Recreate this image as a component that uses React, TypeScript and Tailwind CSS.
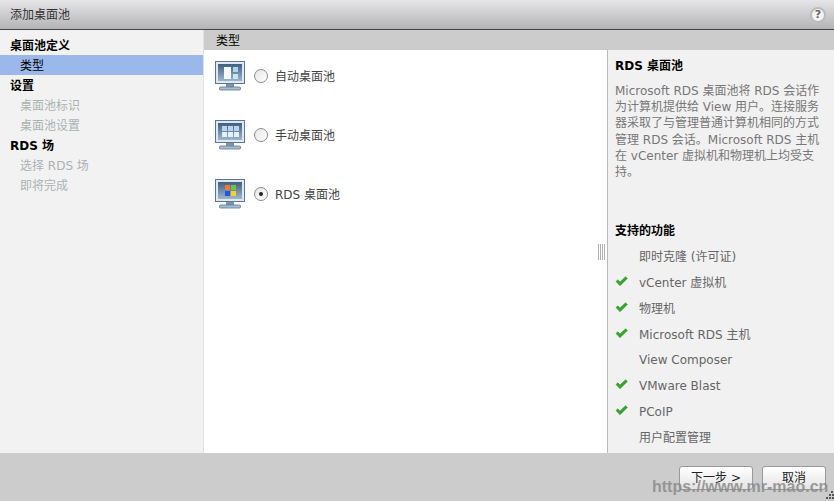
import React from 'react'

const FONT = '"DejaVu Sans", "Noto Sans CJK SC", sans-serif'

const descLines = [
  'Microsoft RDS 桌面池将 RDS 会话作',
  '为计算机提供给 View 用户。连接服务',
  '器采取了与管理普通计算机相同的方式',
  '管理 RDS 会话。Microsoft RDS 主机',
  '在 vCenter 虚拟机和物理机上均受支',
  '持。',
]

const features = [
  { label: '即时克隆 (许可证)', on: false },
  { label: 'vCenter 虚拟机', on: true },
  { label: '物理机', on: true },
  { label: 'Microsoft RDS 主机', on: true },
  { label: 'View Composer', on: false },
  { label: 'VMware Blast', on: true },
  { label: 'PCoIP', on: true },
  { label: '用户配置管理', on: false },
]

const navItems = [
  { label: '桌面池定义', kind: 'head' },
  { label: '类型', kind: 'active' },
  { label: '设置', kind: 'head' },
  { label: '桌面池标识', kind: 'off' },
  { label: '桌面池设置', kind: 'off' },
  { label: 'RDS 场', kind: 'head' },
  { label: '选择 RDS 场', kind: 'off' },
  { label: '即将完成', kind: 'off' },
]

function Monitor({ id, children }: { id: string; children: React.ReactNode }) {
  return (
    <svg width="30" height="30" viewBox="0 0 30 30" className="shrink-0">
      <defs>
        <linearGradient id={id} x1="0" y1="0" x2="0" y2="1">
          <stop offset="0" stopColor="#3f5f80" />
          <stop offset="1" stopColor="#9db6cf" />
        </linearGradient>
      </defs>
      <rect x="0.5" y="0.5" width="29" height="22" fill="#dfe8f1" stroke="#5d7690" />
      <rect x="3" y="3" width="24" height="17" fill={`url(#${id})`} />
      <rect x="11" y="23" width="8" height="3" fill="#7d96b0" />
      <rect x="4.5" y="26" width="21" height="3" rx="1" fill="#a9bdd1" stroke="#5d7690" strokeWidth="0.8" />
      {children}
    </svg>
  )
}

function Radio({ checked }: { checked?: boolean }) {
  return (
    <span className="ml-[9px] flex h-[14px] w-[14px] shrink-0 items-center justify-center rounded-full border border-[#8c8c8c] bg-gradient-to-br from-[#e6e6e6] to-white">
      {checked && <span className="h-[4px] w-[4px] rounded-full bg-[#222]" />}
    </span>
  )
}

function PoolOption({ label, checked, icon }: { label: string; checked?: boolean; icon: React.ReactNode }) {
  return (
    <div className="flex h-[30px] items-center">
      {icon}
      <Radio checked={checked} />
      <span className="ml-[7px] pt-[2px] text-xs text-[#444]">{label}</span>
    </div>
  )
}

function Check() {
  return (
    <svg width="13" height="11" viewBox="0 0 13 11" className="mb-[3px] shrink-0">
      <path d="M1 5.5 L2.8 3.8 L5 6 L10.5 0.8 L12.4 2.4 L5 9.8 Z" fill="#35a82a" stroke="#2b8a22" strokeWidth="0.5" />
    </svg>
  )
}

export default function App() {
  return (
    <div className="relative flex h-[501px] w-[834px] flex-col overflow-hidden bg-white text-xs" style={{ fontFamily: FONT }}>
      {/* title bar */}
      <div className="flex h-[30px] shrink-0 items-center justify-between border-b border-[#444] bg-gradient-to-b from-[#e6e6e8] to-[#b4b4b7] pl-[10px] pr-[8px]">
        <span className="text-xs text-[#333]">添加桌面池</span>
        <span className="flex h-[16px] w-[16px] items-center justify-center rounded-full border-2 border-[#bbb] bg-[#f4f4f4] text-[11px] leading-none font-bold text-[#666]">?</span>
      </div>

      <div className="flex min-h-0 flex-1">
        {/* steps */}
        <div className="w-[204px] shrink-0 border-r border-[#e2e2e2] bg-[#f2f2f2] pt-[5px]">
          {navItems.map((item) => (
            <div
              key={item.label}
              className={
                item.kind === 'head'
                  ? 'flex h-[20px] items-center pl-[10px] pt-[2px] font-bold text-black'
                  : item.kind === 'active'
                    ? 'flex h-[20px] items-center bg-[#9ab8ea] pl-[20px] pt-[2px] text-black'
                    : 'flex h-[20px] items-center pl-[20px] pt-[2px] text-[#abb2b2]'
              }
            >
              {item.label}
            </div>
          ))}
        </div>

        <div className="flex min-w-0 flex-1 flex-col">
          <div className="flex h-[20px] shrink-0 items-center bg-[#cccccc] pl-[12px] pt-[2px] text-black">类型</div>

          <div className="flex min-h-0 flex-1">
            {/* pool types */}
            <div className="relative flex-1 bg-white pl-[11px] pt-[11px]">
              <div className="flex flex-col gap-[29px]">
                <PoolOption
                  label="自动桌面池"
                  icon={
                    <Monitor id="m1">
                      <rect x="9" y="6" width="7" height="12" fill="#f4f8fb" />
                      <rect x="18" y="6" width="5" height="5" fill="#a9d6ea" />
                      <rect x="18" y="13" width="5" height="5" fill="#c7e6f2" />
                    </Monitor>
                  }
                />
                <PoolOption
                  label="手动桌面池"
                  icon={
                    <Monitor id="m2">
                      <rect x="7" y="6" width="5" height="5" fill="#b9d4e6" />
                      <rect x="13" y="6" width="5" height="5" fill="#b9d4e6" />
                      <rect x="19" y="6" width="5" height="5" fill="#b9d4e6" />
                      <rect x="7" y="12" width="5" height="5" fill="#e4f2f8" />
                      <rect x="13" y="12" width="5" height="5" fill="#e4f2f8" />
                      <rect x="19" y="12" width="5" height="5" fill="#e4f2f8" />
                    </Monitor>
                  }
                />
                <PoolOption
                  label="RDS 桌面池"
                  checked
                  icon={
                    <Monitor id="m3">
                      <rect x="10" y="6" width="5" height="5" fill="#f0763a" />
                      <rect x="16" y="6" width="5" height="5" fill="#78c040" />
                      <rect x="10" y="12" width="5" height="5" fill="#2a55e0" />
                      <rect x="16" y="12" width="5" height="5" fill="#f8d020" />
                    </Monitor>
                  }
                />
              </div>
              {/* splitter grip */}
              <div className="absolute right-[2px] top-[194px] flex h-[16px] gap-px">
                <span className="w-px bg-[#b0b0b0]" />
                <span className="w-px bg-[#b0b0b0]" />
                <span className="w-px bg-[#b0b0b0]" />
                <span className="w-px bg-[#b0b0b0]" />
              </div>
            </div>

            {/* help panel */}
            <div className="flex w-[227px] shrink-0 flex-col border-l border-[#b9b9b9] bg-[#f1f1f1] pl-[7px]">
              <div className="mt-[8px] h-[16px] leading-[16px] font-bold text-black">RDS 桌面池</div>
              <div className="mt-[9px] text-[#777] leading-[16.2px]">
                {descLines.map((line) => (
                  <div key={line} className="whitespace-nowrap">{line}</div>
                ))}
              </div>
              <div className="mt-[43px] h-[16px] leading-[16px] font-bold text-black">支持的功能</div>
              <div className="mt-[5px] flex flex-col">
                {features.map((f) => (
                  <div key={f.label} className="flex h-[25.8px] items-center">
                    <span className="flex w-[24px] shrink-0 items-center">{f.on && <Check />}</span>
                    <span className="whitespace-nowrap text-[#666]">{f.label}</span>
                  </div>
                ))}
              </div>
            </div>
          </div>
        </div>
      </div>

      {/* footer */}
      <div className="flex h-[48px] shrink-0 items-start justify-end gap-[9px] bg-[#cccccc] pr-[8px] pt-[13px]">
        <button className="h-[24px] w-[74px] rounded-[3px] border border-[#999] bg-gradient-to-b from-white to-[#e4e4e4] text-xs text-[#222]">下一步 &gt;</button>
        <button className="h-[24px] w-[64px] rounded-[3px] border border-[#999] bg-gradient-to-b from-white to-[#e4e4e4] text-xs text-[#222]">取消</button>
      </div>

      {/* resize grip */}
      <svg width="8" height="10" viewBox="0 0 8 10" className="absolute bottom-[1px] right-0">
        <rect x="5" y="1" width="2" height="2" fill="#555" />
        <rect x="3" y="4" width="2" height="2" fill="#555" />
        <rect x="6" y="4" width="2" height="2" fill="#555" />
        <rect x="0" y="7" width="2" height="2" fill="#555" />
        <rect x="3" y="7" width="2" height="2" fill="#555" />
        <rect x="6" y="7" width="2" height="2" fill="#555" />
      </svg>

      {/* watermark */}
      <div className="absolute left-[652px] top-[475px] text-[16px] leading-[24px] font-bold whitespace-nowrap text-[#8a8a8a]/85" style={{ fontFamily: '"Liberation Sans", sans-serif' }}>
        https://www.mr-mao.cn
      </div>
    </div>
  )
}
